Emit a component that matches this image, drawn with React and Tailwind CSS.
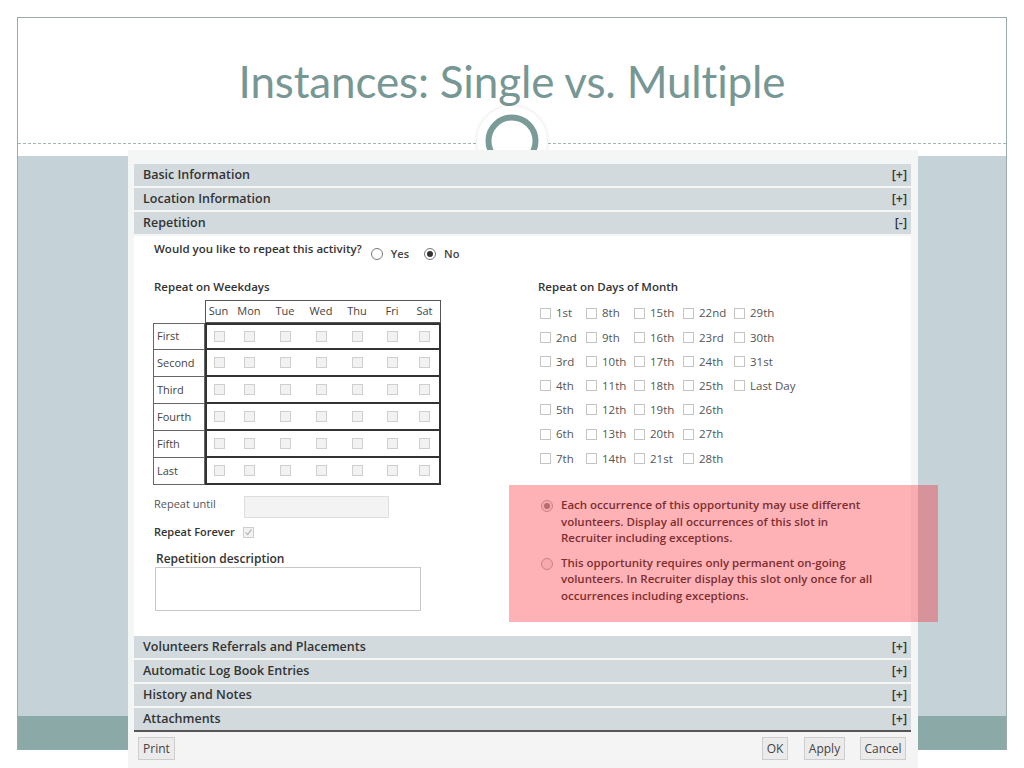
import React from 'react';

const weekdays = ['Sun', 'Mon', 'Tue', 'Wed', 'Thu', 'Fri', 'Sat'];
const weeks = ['First', 'Second', 'Third', 'Fourth', 'Fifth', 'Last'];

const monthDays = [
  ['1st', '8th', '15th', '22nd', '29th'],
  ['2nd', '9th', '16th', '23rd', '30th'],
  ['3rd', '10th', '17th', '24th', '31st'],
  ['4th', '11th', '18th', '25th', 'Last Day'],
  ['5th', '12th', '19th', '26th', ''],
  ['6th', '13th', '20th', '27th', ''],
  ['7th', '14th', '21st', '28th', ''],
];

const Box = ({ checked, muted }) => (
  <span
    className={`inline-flex h-[11px] w-[11px] shrink-0 items-center justify-center border ${
      muted ? 'border-[#cfcfcf] bg-[#f2f2f2]' : 'border-[#c4c4c4] bg-white'
    }`}
  >
    {checked && (
      <svg viewBox="0 0 12 12" className="h-[10px] w-[10px]">
        <path d="M2 6.5 L5 9.5 L10 2.5" fill="none" stroke="#b5b5b5" strokeWidth="1.6" />
      </svg>
    )}
  </span>
);

const Radio = ({ checked, muted }) => (
  <span
    className={`inline-flex h-[12px] w-[12px] shrink-0 items-center justify-center rounded-full border ${
      muted ? 'border-[#b8b8b8] bg-[#f4f4f4]' : 'border-[#777] bg-white'
    }`}
  >
    {checked && (
      <span className={`h-[6px] w-[6px] rounded-full ${muted ? 'bg-[#9a9a9a]' : 'bg-[#333]'}`} />
    )}
  </span>
);

const Bar = ({ title, sign = '[+]', last }) => (
  <div
    className={`flex h-[22px] items-center justify-between bg-[#d2dadd] pl-[9px] pr-[4px] text-[12.5px] font-semibold text-[#333] ${
      last ? '' : 'mb-[2px]'
    }`}
  >
    <span>{title}</span>
    <span>{sign}</span>
  </div>
);

const Button = ({ children, className }) => (
  <button
    className={`flex h-[23px] items-center justify-center border border-[#cdcdcd] bg-[#ebebeb] text-[12px] text-[#444] ${className}`}
  >
    {children}
  </button>
);

const App = () => {
  return (
    <div className="relative h-[768px] w-[1024px] overflow-hidden bg-white font-['Open_Sans',sans-serif]">
      {/* Slide frame */}
      <div className="px-[17px] pt-[17px]">
        <div className="flex h-[733px] flex-col border-x border-t border-[#9aabab]">
          <div className="flex h-[125px] items-center justify-center">
            <h1 className="font-['Lato',sans-serif] text-[44px] tracking-[-0.15px] text-[#779795]">
              Instances: Single vs. Multiple
            </h1>
          </div>
          <div className="border-t border-dashed border-[#a3b6b6]" />
          <div className="h-[12px]" />
          <div className="flex-1 bg-[#c5d3d9]" />
          <div className="h-[34px] bg-[#8aa9a7]" />
        </div>
      </div>

      {/* Ring ornament */}
      <div className="absolute left-[477px] top-[106px] h-[70px] w-[70px] rounded-full bg-white shadow-[0_0_4px_rgba(0,0,0,0.12)]">
        <svg viewBox="0 0 70 70" className="h-full w-full">
          <circle cx="35" cy="35" r="23.5" fill="none" stroke="#7b9b99" strokeWidth="6" />
        </svg>
      </div>

      {/* Form screenshot */}
      <div className="absolute left-[128px] top-[150px] flex h-[618px] w-[790px] flex-col bg-[#f4f6f6] pt-[14px]">
        <div className="pl-[6px] pr-[7px]">
          <Bar title="Basic Information" />
          <Bar title="Location Information" />
          <Bar title="Repetition" sign="[-]" />

          <div className="h-[400px] bg-white pl-[20px] pt-[5px] text-[#333]">
            {/* Question */}
            <div className="flex items-start">
              <span className="text-[11.5px] font-semibold leading-[16px]">
                Would you like to repeat this activity?
              </span>
              <div className="ml-[9px] mt-[6px] flex items-center text-[11px] font-semibold leading-[14px] text-[#444]">
                <Radio />
                <span className="ml-[8px]">Yes</span>
                <span className="ml-[15px] flex">
                  <Radio checked />
                </span>
                <span className="ml-[8px]">No</span>
              </div>
            </div>

            <div className="mt-[18px] flex">
              {/* Left column */}
              <div className="w-[384px]">
                <div className="text-[11.5px] font-semibold leading-[16px]">Repeat on Weekdays</div>
                <div className="-ml-px mt-[5px]">
                  <div className="ml-[52px] grid h-[23px] w-[236px] grid-cols-[25px_36px_36px_36px_36px_34px_31px] items-center border border-[#555] text-[11px] text-[#444]">
                    {weekdays.map((d) => (
                      <span key={d} className="text-center">
                        {d}
                      </span>
                    ))}
                  </div>
                  {weeks.map((w, i) => (
                    <div key={w} className="flex h-[27px]">
                      <div
                        className={`flex w-[52px] items-center border-x border-b border-[#666] pl-[3px] text-[11px] text-[#444] ${
                          i === 0 ? 'border-t' : ''
                        }`}
                      >
                        {w}
                      </div>
                      <div
                        className={`grid w-[236px] grid-cols-[24px_36px_36px_36px_36px_34px_30px] items-center border-x-2 border-b-2 border-[#333] ${
                          i === 0 ? 'border-t-2' : ''
                        }`}
                      >
                        {weekdays.map((d) => (
                          <span key={d} className="flex justify-center">
                            <Box muted />
                          </span>
                        ))}
                      </div>
                    </div>
                  ))}
                </div>

                <div className="mt-[11px] flex h-[22px] items-start">
                  <span className="w-[90px] text-[11px] leading-[16px] text-[#555]">Repeat until</span>
                  <span className="h-[22px] w-[145px] border border-[#dedede] bg-[#f3f3f3]" />
                </div>
                <div className="mt-[7px] flex h-[14px] items-center">
                  <span className="text-[11px] font-semibold">Repeat Forever</span>
                  <span className="ml-[8px] flex">
                    <Box checked muted />
                  </span>
                </div>
                <div className="ml-[2px] mt-[12px] text-[12px] font-semibold leading-[16px]">
                  Repetition description
                </div>
                <div className="ml-px h-[44px] w-[266px] border border-[#c8c8c8] bg-white" />
              </div>

              {/* Right column */}
              <div className="flex-1">
                <div className="text-[11.5px] font-semibold leading-[16px]">Repeat on Days of Month</div>
                <div className="ml-[2px] mt-[6px]">
                  {monthDays.map((row, r) => (
                    <div
                      key={r}
                      className="grid h-[24.2px] grid-cols-[46px_48px_49px_51px_100px] items-center text-[11.5px] text-[#555]"
                    >
                      {row.map((label, c) => (
                        <span key={c} className="flex items-center">
                          {label && (
                            <>
                              <Box />
                              <span className="ml-[5px]">{label}</span>
                            </>
                          )}
                        </span>
                      ))}
                    </div>
                  ))}
                </div>

                <div className="ml-[3px] mt-[27px] text-[11.5px] font-semibold leading-[16.5px] text-[#444]">
                  <div className="flex items-start">
                    <span className="mt-[3px] flex">
                      <Radio checked muted />
                    </span>
                    <p className="ml-[8px]">
                      Each occurrence of this opportunity may use different
                      <br />
                      volunteers. Display all occurrences of this slot in
                      <br />
                      Recruiter including exceptions.
                    </p>
                  </div>
                  <div className="mt-[8px] flex items-start">
                    <span className="mt-[3px] flex">
                      <Radio muted />
                    </span>
                    <p className="ml-[8px]">
                      This opportunity requires only permanent on-going
                      <br />
                      volunteers. In Recruiter display this slot only once for all
                      <br />
                      occurrences including exceptions.
                    </p>
                  </div>
                </div>
              </div>
            </div>
          </div>

          <Bar title="Volunteers Referrals and Placements" />
          <Bar title="Automatic Log Book Entries" />
          <Bar title="History and Notes" />
          <Bar title="Attachments" last />
          <div className="h-[2px] bg-[#555]" />
        </div>

        {/* Footer */}
        <div className="flex flex-1 items-start justify-between bg-[#f4f4f4] pl-[10px] pr-[12px] pt-[5px]">
          <Button className="w-[37px]">Print</Button>
          <div className="flex items-start">
            <Button className="w-[26px]">OK</Button>
            <Button className="ml-[16px] w-[41px]">Apply</Button>
            <Button className="ml-[15px] w-[46px]">Cancel</Button>
          </div>
        </div>
      </div>

      {/* Highlight annotation */}
      <div className="absolute left-[509px] top-[485px] h-[137px] w-[429px] bg-[#ff000a4d]" />
    </div>
  );
};

export default App;
